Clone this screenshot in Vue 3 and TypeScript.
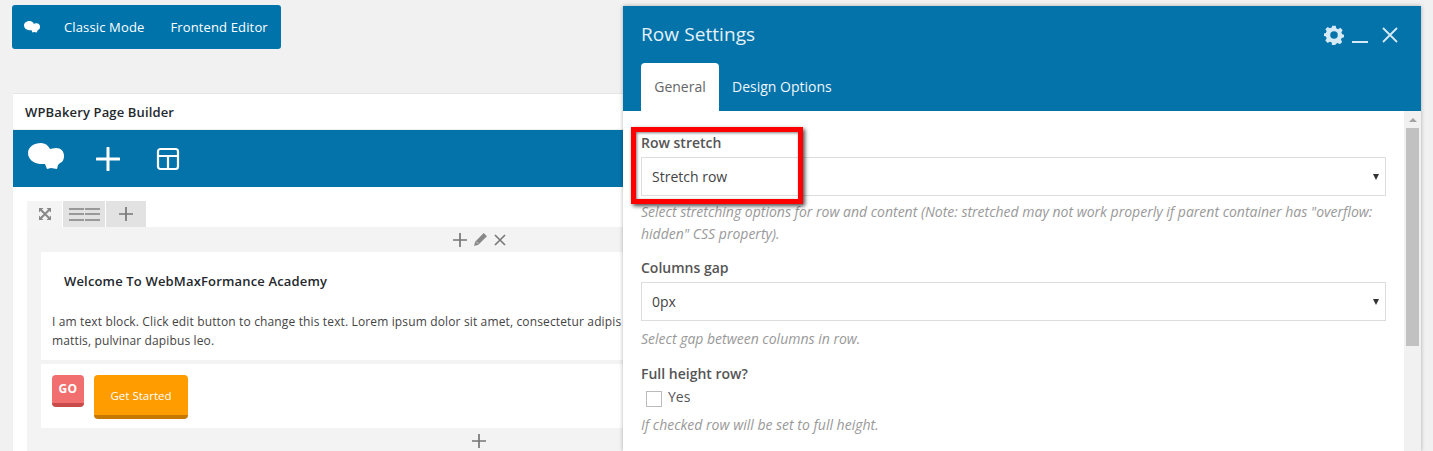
<script setup lang="ts">
const CLOUD = 'M13 0C6 0 0 4 0 10c0 6 5 10 12 11l5 0 2 5 4-1 6 1 1-4 2-2c3-1 4-4 4-7 0-5-3-8-8-8-2 0-5 1-6 1C20 2 17 0 13 0z'
</script>

<template>
  <div class="page">
    <div class="left">
      <nav class="topbar">
        <svg class="logo-s" viewBox="0 0 36 27"><path :d="CLOUD" fill="#fff" /></svg>
        <span class="mode first">Classic Mode</span>
        <span class="mode">Frontend Editor</span>
      </nav>

      <section class="panel">
        <h2 class="panel-title">WPBakery Page Builder</h2>
        <div class="bluebar">
          <svg class="logo-l" viewBox="0 0 36 27"><path :d="CLOUD" fill="#fff" /></svg>
          <svg class="bar-plus" viewBox="0 0 24 24"><path d="M12 1v22M1 12h22" stroke="#fff" stroke-width="3" stroke-linecap="round" /></svg>
          <svg class="bar-layout" viewBox="0 0 24 24" fill="none" stroke="#fff" stroke-width="2.2"><rect x="2" y="2" width="20" height="20" rx="2.5" /><path d="M2 9h20M12 9v13" /></svg>
        </div>
        <div class="body">
          <div class="row-tabs">
            <div class="rt rt-move">
              <svg viewBox="0 0 14 14" width="14" height="14" fill="none" stroke="#888" stroke-width="2"><path d="M3 3l8 8M11 3l-8 8" /><path d="M1 1h4.500L1 5.500zM13 1H8.500L13 5.500zM1 13h4.500L1 8.500zM13 13H8.500L13 8.500z" fill="#888" stroke="none" /></svg>
            </div>
            <div class="rt rt-cols">
              <span class="lines"><i></i><i></i><i></i></span>
              <span class="lines"><i></i><i></i><i></i></span>
            </div>
            <div class="rt rt-add">
              <svg viewBox="0 0 16 16" width="16" height="16"><path d="M8 1v14M1 8h14" stroke="#777" stroke-width="1.700" /></svg>
            </div>
          </div>
          <div class="row-box">
            <div class="controls">
              <svg viewBox="0 0 16 16" width="16" height="16"><path d="M8 1v14M1 8h14" stroke="#777" stroke-width="1.700" /></svg>
              <svg viewBox="0 0 14 14" width="15" height="15"><path d="M10 1l3 3-8 8-4 1 1-4z" fill="#888" /><path d="M3 9l2 2" stroke="#fff" stroke-width=".6" /></svg>
              <svg viewBox="0 0 14 14" width="14" height="14"><path d="M2 2l10 10M12 2L2 12" stroke="#777" stroke-width="1.600" /></svg>
            </div>
            <div class="cell text-cell">
              <h3 class="welcome">Welcome To WebMaxFormance Academy</h3>
              <p class="lorem">I am text block. Click edit button to change this text. Lorem ipsum dolor sit amet, consectetur adipis<br />mattis, pulvinar dapibus leo.</p>
            </div>
            <div class="cell btn-cell">
              <span class="go">GO</span>
              <span class="started">Get Started</span>
            </div>
            <div class="controls bottom">
              <svg viewBox="0 0 16 16" width="16" height="16"><path d="M8 1v14M1 8h14" stroke="#777" stroke-width="1.700" /></svg>
            </div>
          </div>
        </div>
      </section>
    </div>

    <aside class="modal">
      <header class="m-head">
        <div class="m-title-row">
          <h1 class="m-title">Row Settings</h1>
          <div class="m-icons">
            <svg class="gear" viewBox="0 0 24 24"><path fill="#d5eaf5" fill-rule="evenodd" d="M10 1h4l.7 3 2.300 1 2.600-1.600 2.800 2.800L20.800 8.800l1 2.200 2.200.8v3l-2.700.7-1 2.300 1.500 2.600-2.800 2.800-2.600-1.500-2.300 1-.600 2.200h-4L9.300 21l-2.300-1-2.600 1.500-2.800-2.800L3.200 16l-1-2.300L0 13.200v-3l2.200-.6 1-2.400L1.600 5.200l2.800-2.800L7 4l2.300-1zM12 7.500a4.500 4.500 0 1 0 0 9 4.500 4.500 0 0 0 0-9z" /></svg>
            <span class="min"></span>
            <svg class="close" viewBox="0 0 16 16"><path d="M1 1l14 14M15 1L1 15" stroke="#d5eaf5" stroke-width="1.800" /></svg>
          </div>
        </div>
        <div class="m-tabs">
          <span class="tab active">General</span>
          <span class="tab">Design Options</span>
        </div>
      </header>
      <div class="m-body">
        <div class="m-form">
          <div class="field">
            <label class="lbl">Row stretch</label>
            <div class="select"><span>Stretch row</span><i class="arrow"></i></div>
            <p class="hint">Select stretching options for row and content (Note: stretched may not work properly if parent container has "overflow: hidden" CSS property).</p>
          </div>
          <div class="field f2">
            <label class="lbl">Columns gap</label>
            <div class="select"><span>0px</span><i class="arrow"></i></div>
            <p class="hint">Select gap between columns in row.</p>
          </div>
          <div class="field f3">
            <label class="lbl">Full height row?</label>
            <div class="check"><i class="box"></i><span>Yes</span></div>
            <p class="hint">If checked row will be set to full height.</p>
          </div>
        </div>
        <div class="scroll">
          <i class="up"></i>
          <div class="thumb"></div>
        </div>
        <div class="redbox"></div>
      </div>
    </aside>
  </div>
</template>

<style>
html, body { margin: 0; background: #f1f1f1; }
</style>

<style scoped>
.page {
  position: relative;
  width: 1433px;
  height: 451px;
  overflow: hidden;
  background: #f1f1f1;
  font-family: "Open Sans", sans-serif;
}
.left { padding: 5px 0 0 12px; }
.topbar {
  width: 269px;
  height: 44px;
  background: #0073aa;
  border-radius: 3px;
  display: flex;
  align-items: center;
  color: #fff;
  font-size: 13px;
  letter-spacing: 0.14px;
  box-sizing: border-box;
  padding-left: 12px;
}
.logo-s { width: 16px; height: 12px; }
.mode { margin-left: 26px; white-space: nowrap; }
.mode.first { margin-left: 24px; }
.panel {
  margin: 44px 0 0 1px;
  width: 932px;
  background: #fff;
  border-top: 1px solid #e5e5e5;
  box-shadow: 0 1px 1px rgba(0, 0, 0, 0.04);
}
.panel-title {
  margin: 0;
  height: 36px;
  box-sizing: border-box;
  padding: 9px 0 0 12px;
  font-size: 13px;
  line-height: 18px;
  font-weight: 600;
  letter-spacing: 0.14px;
  color: #23282d;
  border-bottom: 1px solid #eee;
}
.bluebar {
  height: 57px;
  background: #0473aa;
  display: flex;
  align-items: center;
  padding-left: 15px;
}
.logo-l { width: 36px; height: 27px; margin-top: -4px; }
.bar-plus { width: 24px; height: 24px; margin-left: 32px; }
.bar-layout { width: 24px; height: 24px; margin-left: 36px; }
.body { padding: 14px 14px 0; }
.row-tabs { display: flex; height: 26px; gap: 1px; }
.rt { display: flex; align-items: center; justify-content: center; height: 26px; background: #e2e2e2; }
.rt-move { width: 35px; background: #f4f4f4; }
.rt-cols { width: 42px; gap: 1px; }
.rt-add { width: 40px; }
.lines { display: flex; flex-direction: column; gap: 3.5px; width: 15px; }
.lines i { display: block; height: 2px; background: #999; }
.row-box { background: #f3f3f3; padding: 0 14px 20px; }
.controls {
  height: 25px;
  display: flex;
  align-items: center;
  justify-content: center;
  gap: 5px;
}
.cell { background: #fff; }
.text-cell { height: 108px; box-sizing: border-box; padding: 20px 0 0 11px; }
.welcome {
  margin: 0 0 0 12px;
  font-size: 13px;
  line-height: 18px;
  font-weight: 600;
  letter-spacing: 0.16px;
  color: #23282d;
}
.lorem {
  margin: 22px 0 0;
  font-size: 12px;
  line-height: 19px;
  letter-spacing: 0.14px;
  color: #444;
  white-space: nowrap;
}
.btn-cell {
  margin-top: 4px;
  height: 64px;
  box-sizing: border-box;
  padding: 11px 0 0 11px;
  display: flex;
  align-items: flex-start;
  gap: 10px;
}
.go {
  width: 32px;
  height: 32px;
  box-sizing: border-box;
  padding-top: 7px;
  background: #f26f6f;
  border-bottom: 4px solid #c94a4a;
  border-radius: 4px;
  color: #fff;
  font-size: 12px;
  line-height: 14px;
  font-weight: 700;
  text-align: center;
  letter-spacing: 0.3px;
}
.started {
  width: 94px;
  height: 44px;
  box-sizing: border-box;
  background: #ff9c00;
  border-bottom: 4px solid #c67900;
  border-radius: 4px;
  color: #fff;
  font-size: 11.5px;
  line-height: 42px;
  text-align: center;
}
.modal {
  position: absolute;
  left: 623px;
  top: 6px;
  width: 798px;
  height: 445px;
  background: #fff;
  box-shadow: 0 0 4px rgba(0, 0, 0, 0.3);
}
.m-head { height: 105px; background: #0473aa; box-sizing: border-box; padding: 0 23px 0 18px; }
.m-title-row { height: 57px; display: flex; align-items: center; justify-content: space-between; }
.m-title { margin: 0; font-size: 19px; line-height: 27px; font-weight: 400; letter-spacing: 0.08px; color: #e4f1f8; }
.m-icons { display: flex; align-items: center; }
.gear { width: 20px; height: 20px; margin-right: -1px; }
.min { width: 16px; height: 2px; background: #d5eaf5; margin: 14px 0 0 9px; }
.close { width: 16px; height: 16px; margin-left: 14px; }
.m-tabs { display: flex; height: 48px; }
.tab {
  box-sizing: border-box;
  width: 78px;
  height: 48px;
  color: #eef6fa;
  font-size: 14px;
  line-height: 48px;
  text-align: center;
  white-space: nowrap;
}
.tab.active { background: #fff; color: #666; border-radius: 4px 4px 0 0; }
.tab:not(.active) { width: auto; margin-left: 13px; font-weight: 500; }
.m-body { position: relative; display: flex; height: 340px; overflow: hidden; }
.m-form { width: 781px; box-sizing: border-box; padding: 22px 18px 0; }
.lbl {
  display: block;
  font-size: 14px;
  line-height: 19px;
  font-weight: 600;
  color: #555;
}
.select {
  margin-top: 5px;
  height: 39px;
  box-sizing: border-box;
  border: 1px solid #ddd;
  padding: 0 6px 0 10px;
  display: flex;
  align-items: center;
  justify-content: space-between;
  font-size: 14px;
  color: #444;
}
.arrow {
  width: 0;
  height: 0;
  border-left: 3.500px solid transparent;
  border-right: 3.500px solid transparent;
  border-top: 6px solid #333;
}
.hint {
  margin: 5px 0 0;
  font-size: 14px;
  line-height: 22px;
  font-style: italic;
  color: #999;
}
.f2 { margin-top: 13px; }
.f2 .hint { margin-top: 7px; }
.f3 { margin-top: 14px; }
.check {
  display: flex;
  align-items: center;
  height: 22px;
  margin: 2px 0 0 5px;
  gap: 6px;
  font-size: 14px;
  color: #555;
}
.box { width: 16px; height: 16px; border: 1px solid #bbb; box-sizing: border-box; margin-top: 5px; }
.f3 .hint { margin-top: 7px; }
.scroll {
  width: 17px;
  background: #f1f1f1;
  position: relative;
}
.up {
  position: absolute;
  left: 5px;
  top: 7px;
  border-left: 4px solid transparent;
  border-right: 4px solid transparent;
  border-bottom: 4px solid #a3a3a3;
}
.thumb {
  position: absolute;
  left: 2px;
  right: 2px;
  top: 17px;
  height: 218px;
  background: #c1c1c1;
}
.redbox {
  position: absolute;
  left: 8px;
  top: 16px;
  width: 172px;
  height: 77px;
  box-sizing: border-box;
  border: 5px solid #f00;
  box-shadow: 2px 2px 4px rgba(0, 0, 0, 0.7), inset 1px 1px 3px rgba(0, 0, 0, 0.5);
  pointer-events: none;
}
</style>
